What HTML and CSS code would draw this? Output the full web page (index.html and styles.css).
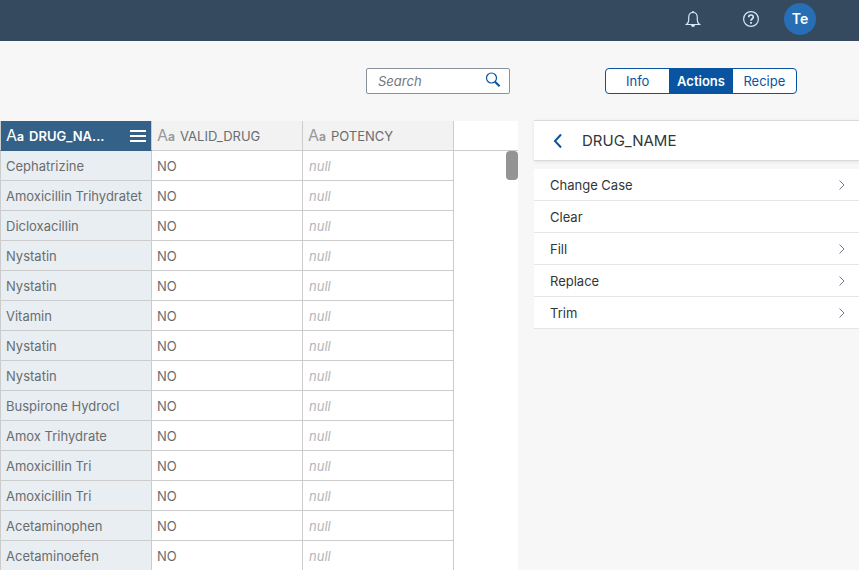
FILE: index.html
```html
<!DOCTYPE html>
<html lang="en">
<head>
<meta charset="utf-8">
<title>Data preparation</title>
<link rel="stylesheet" href="styles.css">
</head>
<body>
<header class="shell">
  <button class="shell-button" aria-label="Notifications">
    <svg class="icon" viewBox="0 0 16 16"><path d="M1.500 13.500h13c-1.500-1-2.200-2.200-2.200-4.500V6.500C12.300 3.500 10.500 1.500 8 1.500S3.700 3.500 3.700 6.500V9c0 2.300-.7 3.500-2.200 4.500z"/><path class="solid" d="M6 14h4a2 2 0 0 1-4 0zM7 .3h2v1.400H7z"/></svg>
  </button>
  <button class="shell-button" aria-label="Help">
    <svg class="icon" viewBox="0 0 16 16"><circle cx="8" cy="8" r="7.400"/><path class="mark" d="M5.700 6.200C5.700 4.800 6.700 4 8 4s2.300.8 2.300 2.100C10.300 7.700 8 7.800 8 9.800"/><path class="solid" d="M7.100 11h1.800v1.800H7.100z"/></svg>
  </button>
  <button class="avatar">Te</button>
</header>
<main class="workspace">
  <form class="search" role="search">
    <input class="search-input" type="search" placeholder="Search" aria-label="Search">
    <button class="search-button" type="button" aria-label="Run search">
      <svg class="icon search-icon" viewBox="0 0 16 16"><circle cx="6.500" cy="6" r="5"/><path class="handle" d="M10 9.700l4.600 4.600"/></svg>
    </button>
  </form>
  <nav class="segments" aria-label="Panel">
    <button class="segment">Info</button>
    <button class="segment selected" aria-pressed="true">Actions</button>
    <button class="segment">Recipe</button>
  </nav>
  <section class="grid-pane">
    <table class="data">
      <colgroup><col class="col-first"><col class="col"><col class="col"><col></colgroup>
      <thead>
        <tr>
          <th class="active"><div class="head"><span class="type">A<small>a</small></span><span class="name">DRUG_NA...</span><button class="menu" aria-label="Column menu"><svg class="menu-icon" viewBox="0 0 16 12"><path d="M0 1h16M0 6h16M0 11h16"/></svg></button></div></th>
          <th><div class="head"><span class="type">A<small>a</small></span><span class="name">VALID_DRUG</span></div></th>
          <th><div class="head"><span class="type">A<small>a</small></span><span class="name">POTENCY</span></div></th>
          <td class="filler"></td>
        </tr>
      </thead>
      <tbody>
        <tr><td>Cephatrizine</td><td>NO</td><td>null</td></tr>
        <tr><td>Amoxicillin Trihydratet</td><td>NO</td><td>null</td></tr>
        <tr><td>Dicloxacillin</td><td>NO</td><td>null</td></tr>
        <tr><td>Nystatin</td><td>NO</td><td>null</td></tr>
        <tr><td>Nystatin</td><td>NO</td><td>null</td></tr>
        <tr><td>Vitamin</td><td>NO</td><td>null</td></tr>
        <tr><td>Nystatin</td><td>NO</td><td>null</td></tr>
        <tr><td>Nystatin</td><td>NO</td><td>null</td></tr>
        <tr><td>Buspirone Hydrocl</td><td>NO</td><td>null</td></tr>
        <tr><td>Amox Trihydrate</td><td>NO</td><td>null</td></tr>
        <tr><td>Amoxicillin Tri</td><td>NO</td><td>null</td></tr>
        <tr><td>Amoxicillin Tri</td><td>NO</td><td>null</td></tr>
        <tr><td>Acetaminophen</td><td>NO</td><td>null</td></tr>
        <tr><td>Acetaminoefen</td><td>NO</td><td>null</td></tr>
      </tbody>
    </table>
    <div class="thumb"></div>
  </section>
  <aside class="panel">
    <div class="panel-head">
      <button class="back" aria-label="Back"><svg class="back-icon" viewBox="0 0 10 16"><path d="M8 1.500L2 8l6 6.500"/></svg></button>
      <h2 class="panel-title">DRUG_NAME</h2>
    </div>
    <div class="actions">
      <button class="action">Change Case<svg class="chevron" viewBox="0 0 6 10"><path d="M.5.5L5 5 .5 9.500"/></svg></button>
      <button class="action">Clear</button>
      <button class="action">Fill<svg class="chevron" viewBox="0 0 6 10"><path d="M.5.5L5 5 .5 9.500"/></svg></button>
      <button class="action">Replace<svg class="chevron" viewBox="0 0 6 10"><path d="M.5.5L5 5 .5 9.500"/></svg></button>
      <button class="action">Trim<svg class="chevron" viewBox="0 0 6 10"><path d="M.5.5L5 5 .5 9.500"/></svg></button>
    </div>
  </aside>
</main>
</body>
</html>
```
FILE: styles.css
```css
* { box-sizing: border-box; }
body {
  margin: 0;
  height: 100vh;
  overflow: hidden;
  display: flex;
  flex-direction: column;
  background: #f7f7f7;
  color: #32363a;
  font: 13px/20px Inter, "Liberation Sans", sans-serif;
}
button { font: inherit; color: inherit; border: 0; background: none; padding: 0; }
svg { display: block; fill: none; }

.shell {
  flex: none;
  display: flex;
  justify-content: flex-end;
  align-items: center;
  height: 41px;
  padding: 0 43px 3px 0;
  background: #354a5f;
}
.shell-button { display: grid; place-items: center; width: 32px; height: 32px; margin-right: 26px; color: #d1e8ff; }
.shell-button + .avatar { margin-left: -9px; }
.icon { width: 16px; height: 16px; stroke: currentColor; stroke-width: 1.2; }
.icon .solid { fill: currentColor; stroke: none; }
.icon .mark { stroke-width: 1.7; }
.avatar { width: 32px; height: 32px; border-radius: 50%; background: #286eb4; color: #fff; font-size: 14px; font-weight: 600; }

.workspace {
  flex: 1;
  min-height: 0;
  display: grid;
  grid-template-columns: minmax(0, 1fr) 325px;
  grid-template-rows: 80px minmax(0, 1fr);
  column-gap: 16px;
}
.search {
  display: flex;
  align-items: center;
  justify-self: end;
  align-self: center;
  width: 144px;
  height: 26px;
  margin-right: 8px;
  border: 1px solid #89919a;
  border-radius: 2px;
  background: #fff;
}
.search-input { flex: 1; min-width: 0; padding: 0 0 0 11px; border: 0; outline: 0; background: none; font: inherit; color: #32363a; }
.search-input::placeholder { color: #74777a; font-style: italic; opacity: 1; }
.search-button { padding: 0 8px 2px 0; color: #0854a0; }
.search-icon .handle { stroke-width: 2; }

.segments {
  display: flex;
  align-self: center;
  justify-self: start;
  width: 192px;
  height: 26px;
  margin-left: 71px;
  border: 1px solid #0854a0;
  border-radius: 4px;
  overflow: hidden;
  background: #fff;
  color: #0854a0;
}
.segment { flex: 1; }
.segment.selected { background: #0854a0; color: #fff; font-weight: 600; }

.grid-pane { position: relative; background: #fff; overflow: hidden; }
.data { width: 100%; table-layout: fixed; border-collapse: separate; border-spacing: 0; color: #6a6d70; }
.col-first { width: 152px; }
.col { width: 151px; }
.data th, .data td { height: 30px; padding: 0 5px; border: solid #ccc; border-width: 0 1px 1px 0; text-align: left; font-weight: 400; white-space: nowrap; }
.data th:first-child, .data td:first-child { border-left-width: 1px; }
.data th { background: #f2f2f2; }
.data th.active { background: #346187; border-bottom-color: #346187; color: #fff; }
.data td.filler { border-right: 0; }
.data tbody td:first-child { background: #e9eef2; }
.data tbody td:nth-child(3) { color: #b3b5b7; font-style: italic; padding-left: 6px; }
.head { display: flex; align-items: baseline; gap: 5px; }
.type { color: #999; font-size: 16px; line-height: 20px; }
.type small { font-size: 12px; font-weight: 700; }
.active .type { color: #fff; }
.active .name { font-weight: 600; }
.menu { align-self: center; margin-left: auto; }
.menu-icon { width: 16px; height: 12px; stroke: #fff; stroke-width: 2; }
.thumb { position: absolute; top: 30px; right: 0; width: 12px; height: 29px; border-radius: 4px; background: #949494; }

.panel-head { display: flex; align-items: center; height: 41px; margin-top: -1px; padding-left: 19px; border: solid #d9d9d9; border-width: 1px 0; background: #fff; box-shadow: 0 1px 4px rgba(0, 0, 0, 0.08); }
.back-icon { width: 10px; height: 16px; stroke: #0854a0; stroke-width: 2; }
.panel-title { margin: 0 0 0 19px; font-size: 15px; font-weight: 400; }
.actions { margin-top: 8px; }
.action { display: flex; align-items: center; justify-content: space-between; width: 100%; height: 32px; padding: 0 14px 0 16px; border-bottom: 1px solid #e5e5e5; background: #fff; }
.chevron { width: 6px; height: 10px; stroke: #6a7d96; }
```
